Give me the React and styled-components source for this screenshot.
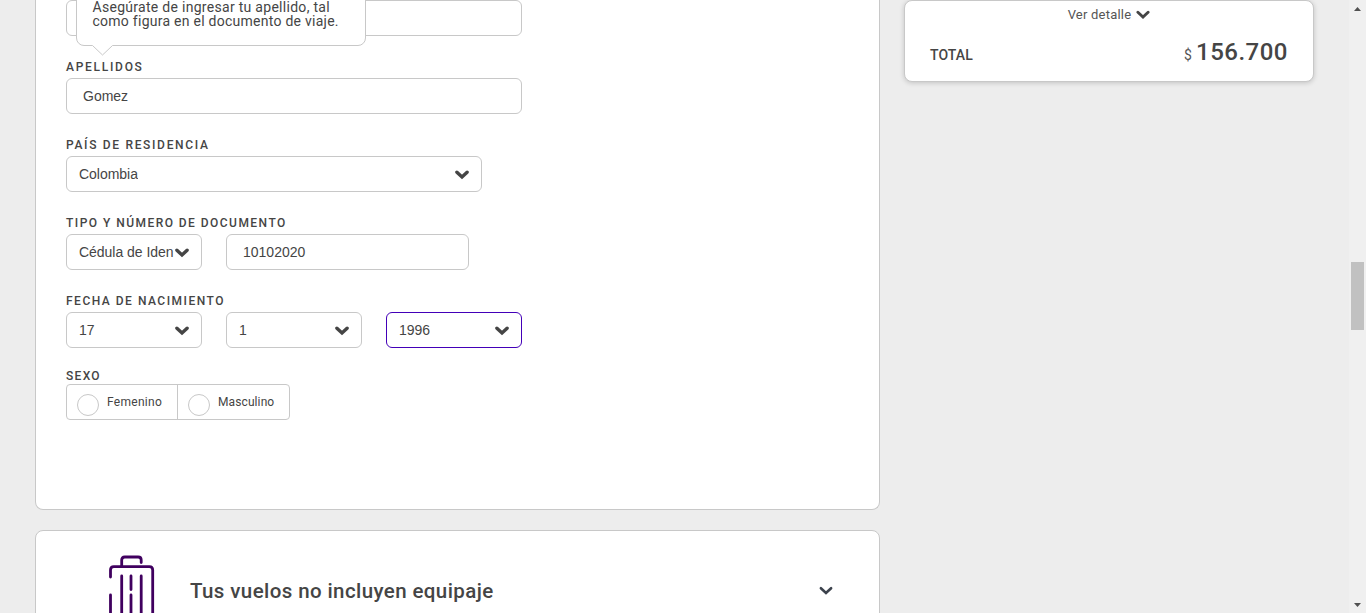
import React from "react";
import styled, { createGlobalStyle } from "styled-components";

const GlobalStyle = createGlobalStyle`
  * { box-sizing: border-box; }
  body { margin: 0; background: #ededed; color: #454545; font-family: Roboto, "Liberation Sans", sans-serif; overflow: hidden; }
`;

const Page = styled.div`
  display: flex;
  align-items: flex-start;
  height: 613px;
  padding-left: 35px;
  overflow: hidden;
`;

const Main = styled.main`
  display: flex;
  flex-direction: column;
  gap: 20px;
  width: 845px;
  height: 613px;
  overflow: hidden;
`;

const Card = styled.section`
  flex: none;
  background: #fff;
  border: 1px solid #c8c8c8;
  border-radius: 8px;
`;

const FormCard = styled(Card)`
  height: 510px;
  padding: 0 30px;
  border-top: 0;
  border-top-left-radius: 0;
  border-top-right-radius: 0;
`;

const Field = styled.div`
  padding-top: ${(p) => p.$top ?? 24}px;
`;

const Label = styled.div`
  height: 14px;
  margin-bottom: ${(p) => p.$gap ?? 4}px;
  font-size: 12px;
  line-height: 14px;
  font-weight: 500;
  letter-spacing: ${(p) => p.$spacing}px;
  white-space: nowrap;
`;

const Row = styled.div`
  display: flex;
  gap: 24px;
`;

const Box = styled.div`
  display: flex;
  align-items: center;
  width: ${(p) => p.$width}px;
  height: 36px;
  border: 1px solid ${(p) => (p.$active ? "#4300b8" : "#c8c8c8")};
  border-radius: 6px;
  background: #fff;
  font-family: "Liberation Sans", Arial, sans-serif;
  font-size: 14px;
  line-height: 16px;
`;

const InputBox = styled(Box)`
  padding: 0 16px;
`;

const SelectBox = styled(Box)`
  justify-content: space-between;
  padding: 0 12px;
`;

const SelectValue = styled.span`
  min-width: 0;
  overflow: hidden;
  white-space: nowrap;
  letter-spacing: -0.03px;
`;

const SelectIcon = styled.span`
  display: flex;
  flex: none;
  padding-top: 2px;
`;

const Hint = styled.div`
  position: absolute;
  left: 76px;
  top: -10px;
  width: 290px;
  height: 56px;
  padding: 9px 16px 9px 15.5px;
  border: 1px solid #c8c8c8;
  border-radius: 8px;
  background: #fff;
  font-size: 14px;
  line-height: 14px;
  white-space: nowrap;
`;

const HintLine = styled.div`
  letter-spacing: ${(p) => p.$spacing}px;
`;

const HintTail = styled.svg`
  position: absolute;
  left: 15px;
  top: 54px;
`;

const RadioGroup = styled.div`
  display: flex;
  width: 224px;
  height: 36px;
  border: 1px solid #c8c8c8;
  border-radius: 4px;
`;

const RadioOption = styled.div`
  display: flex;
  gap: 8px;
  width: ${(p) => p.$width}px;
  padding-left: 10px;
  font-size: 12px;
  line-height: 34px;
  letter-spacing: ${(p) => p.$spacing}px;

  & + & { border-left: 1px solid #c8c8c8; }
`;

const RadioDot = styled.span`
  flex: none;
  width: 22px;
  height: 22px;
  margin-top: 9px;
  border: 1px solid #c8c8c8;
  border-radius: 50%;
`;

const BaggageCard = styled(Card)`
  display: flex;
  align-items: flex-start;
  height: 120px;
  padding: 24px 46px 0 72px;
`;

const BaggageTitle = styled.h2`
  flex: 1;
  margin: 24px 0 0 35px;
  font-size: 20.5px;
  line-height: 24px;
  font-weight: 500;
  letter-spacing: 0.4px;
`;

const BaggageChevron = styled.div`
  display: flex;
  margin-top: 31px;
`;

const Summary = styled.aside`
  width: 410px;
  height: 82px;
  margin-left: 24px;
  padding: 6px 25px 0 25px;
  border: 1px solid #c8c8c8;
  border-radius: 8px;
  background: #fff;
  box-shadow: 0 1px 5px rgba(0, 0, 0, 0.18);
`;

const DetailLink = styled.div`
  display: flex;
  justify-content: center;
  align-items: center;
  gap: 5px;
  height: 16px;
  color: #555;
  font-size: 13px;
  line-height: 16px;
  letter-spacing: 0.22px;
`;

const TotalRow = styled.div`
  display: flex;
  justify-content: space-between;
  align-items: baseline;
  margin-top: 14px;
  line-height: 30px;
`;

const TotalLabel = styled.span`
  font-size: 14px;
  font-weight: 500;
  letter-spacing: 0.1px;
`;

const Currency = styled.span`
  margin-right: 4px;
  color: #555;
  font-size: 14px;
`;

const Amount = styled.span`
  font-size: 24px;
  font-weight: 500;
  letter-spacing: 0.5px;
`;

const Scrollbar = styled.div`
  display: flex;
  flex-direction: column;
  align-items: center;
  width: 17px;
  height: 613px;
  margin-left: auto;
  padding: 7px 0 6px;
  background: #f0f0f0;
`;

const Thumb = styled.div`
  width: 13px;
  height: 68px;
  margin: 251px 0 auto;
  background: #c1c1c1;
`;

const Arrow = styled.svg`
  flex: none;
  display: block;
`;

const Chevron = ({ weight = 3.4, color = "#454545" }) => (
  <svg width="14" height="10" viewBox="0 0 14 10" fill="none" stroke={color} strokeWidth={weight}>
    <path d="M1.900 2.200 7 7 12.100 2.200" strokeLinejoin="miter" strokeLinecap="round" />
  </svg>
);

const Select = ({ width, active, children }) => (
  <SelectBox $width={width} $active={active}>
    <SelectValue>{children}</SelectValue>
    <SelectIcon><Chevron /></SelectIcon>
  </SelectBox>
);

const Suitcase = () => (
  <svg width="47" height="70" viewBox="0 0 47 70" fill="none" stroke="#40005f" strokeWidth="2.800" strokeLinecap="round" strokeLinejoin="round">
    <path d="M13.700 11V5q0-3 3-3H30.200q3 0 3 3V7.500" />
    <path d="M2.500 22V15q0-3.300 3.300-3.300H41.400q3.300 0 3.300 3.300V69M2.500 40V69" />
    <path d="M13.700 21V69M23 21V34.500M23 40V69M33.200 21V69" />
  </svg>
);

export default function App() {
  return (
    <Page>
      <GlobalStyle />
      <Main>
        <FormCard>
          <InputBox $width={456} />
          <Field>
            <Label $spacing={1.72}>APELLIDOS</Label>
            <InputBox $width={456}>Gomez</InputBox>
          </Field>
          <Field>
            <Label $spacing={1.68}>PAÍS DE RESIDENCIA</Label>
            <Select width={416}>Colombia</Select>
          </Field>
          <Field>
            <Label $spacing={1.46}>TIPO Y NÚMERO DE DOCUMENTO</Label>
            <Row>
              <Select width={136}>Cédula de Iden</Select>
              <InputBox $width={243}>10102020</InputBox>
            </Row>
          </Field>
          <Field>
            <Label $spacing={1.5}>FECHA DE NACIMIENTO</Label>
            <Row>
              <Select width={136}>17</Select>
              <Select width={136}>1</Select>
              <Select width={136} active>1996</Select>
            </Row>
          </Field>
          <Field $top={21}>
            <Label $spacing={1.3} $gap={1}>SEXO</Label>
            <RadioGroup>
              <RadioOption $width={110} $spacing={0.28}><RadioDot />Femenino</RadioOption>
              <RadioOption $width={112} $spacing={0.1}><RadioDot />Masculino</RadioOption>
            </RadioGroup>
          </Field>
        </FormCard>
        <BaggageCard>
          <Suitcase />
          <BaggageTitle>Tus vuelos no incluyen equipaje</BaggageTitle>
          <BaggageChevron><Chevron weight={2.6} color="#3c424c" /></BaggageChevron>
        </BaggageCard>
      </Main>
      <Summary>
        <DetailLink>Ver detalle <Chevron weight={2.9} /></DetailLink>
        <TotalRow>
          <TotalLabel>TOTAL</TotalLabel>
          <span><Currency>$</Currency><Amount>156.700</Amount></span>
        </TotalRow>
      </Summary>
      <Scrollbar>
        <Arrow width="7" height="4"><path d="M0 4 3.500 0 7 4z" fill="#505050" /></Arrow>
        <Thumb />
        <Arrow width="7" height="4"><path d="M0 0 3.500 4 7 0z" fill="#505050" /></Arrow>
      </Scrollbar>
      <Hint>
        <HintLine $spacing={0.29}>Asegúrate de ingresar tu apellido, tal</HintLine>
        <HintLine $spacing={0.26}>como figura en el documento de viaje.</HintLine>
        <HintTail width="21" height="11" viewBox="0 0 21 11">
          <path d="M0 0 10.500 10 21 0" fill="#fff" />
          <path d="M.5 .5 10.500 10 20.500 .5" fill="none" stroke="#c8c8c8" />
        </HintTail>
      </Hint>
    </Page>
  );
}
